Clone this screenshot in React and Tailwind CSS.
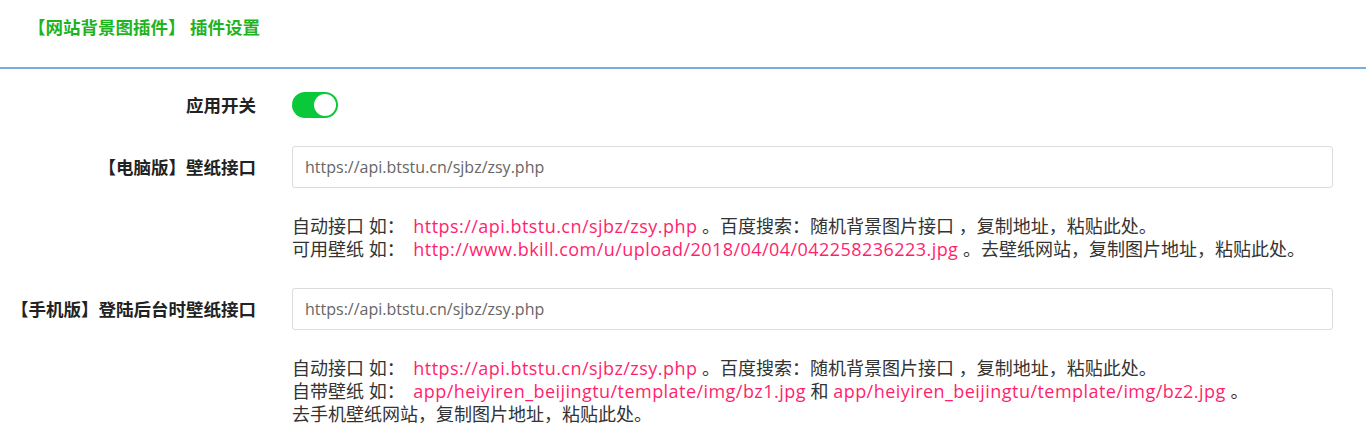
import React, { useState } from 'react';

const FONT = { fontFamily: '"Open Sans", "Noto Sans CJK SC", sans-serif' };

const Link = ({ children, className = '' }) => (
  <span className={`text-[#ff1f6e] tracking-[0.45px] ${className}`}>{children}</span>
);

const Row = ({ label, children, className = '' }) => (
  <div className={`flex items-center ${className}`}>
    <div className="w-[256px] shrink-0 text-right text-[17.5px] font-bold text-[#222] whitespace-nowrap">{label}</div>
    <div className="ml-[36px] flex-1">{children}</div>
  </div>
);

const Help = ({ children, className = '' }) => (
  <div className={`ml-[292px] text-[18px] leading-[23px] text-[#333] whitespace-nowrap ${className}`}>{children}</div>
);

const App = () => {
  const [enabled, setEnabled] = useState(true);
  const [pcApi, setPcApi] = useState('');
  const [mobileApi, setMobileApi] = useState('');

  return (
    <div className="w-[1366px] h-[448px] bg-white overflow-hidden" style={FONT}>
      {/* Header */}
      <div className="h-[69px] border-b-2 border-[#79ade0] flex items-start pt-[14px] pl-[28px]">
        <h1 className="text-[17.5px] font-bold text-[#1fb31f]">【网站背景图插件】 插件设置</h1>
      </div>

      <div className="pt-[23px] pr-[33px]">
        <Row label="应用开关">
          <button
            onClick={() => setEnabled(!enabled)}
            className={`relative block w-[46px] h-[26px] rounded-full ${enabled ? 'bg-[#0bc83a]' : 'bg-gray-300'}`}
          >
            <span
              className={`absolute top-[2px] w-[22px] h-[22px] rounded-full bg-white ${enabled ? 'right-[2px]' : 'left-[2px]'}`}
            />
          </button>
        </Row>

        <Row label="【电脑版】壁纸接口" className="mt-[28px]">
          <input
            value={pcApi}
            onChange={(e) => setPcApi(e.target.value)}
            placeholder="https://api.btstu.cn/sjbz/zsy.php"
            className="w-full h-[42px] px-[12px] border border-[#dcdcdc] rounded-[3px] text-[16px] text-[#555] placeholder:text-[#666] outline-none"
          />
        </Row>

        <Help className="mt-[27px]">
          <div>
            自动接口 如： <Link className="ml-[4px]">https://api.btstu.cn/sjbz/zsy.php</Link> 。百度搜索：随机背景图片接口 ，复制地址，粘贴此处。
          </div>
          <div>
            可用壁纸 如： <Link className="ml-[4px]">http://www.bkill.com/u/upload/2018/04/04/042258236223.jpg</Link> 。去壁纸网站，复制图片地址，粘贴此处。
          </div>
        </Help>

        <Row label="【手机版】登陆后台时壁纸接口" className="mt-[27px]">
          <input
            value={mobileApi}
            onChange={(e) => setMobileApi(e.target.value)}
            placeholder="https://api.btstu.cn/sjbz/zsy.php"
            className="w-full h-[42px] px-[12px] border border-[#dcdcdc] rounded-[3px] text-[16px] text-[#555] placeholder:text-[#666] outline-none"
          />
        </Row>

        <Help className="mt-[27px]">
          <div>
            自动接口 如： <Link className="ml-[4px]">https://api.btstu.cn/sjbz/zsy.php</Link> 。百度搜索：随机背景图片接口 ，复制地址，粘贴此处。
          </div>
          <div>
            自带壁纸 如： <Link className="ml-[4px]">app/heiyiren_beijingtu/template/img/bz1.jpg</Link> 和 <Link>app/heiyiren_beijingtu/template/img/bz2.jpg</Link> 。
          </div>
          <div>去手机壁纸网站，复制图片地址，粘贴此处。</div>
        </Help>
      </div>
    </div>
  );
};

export default App;
